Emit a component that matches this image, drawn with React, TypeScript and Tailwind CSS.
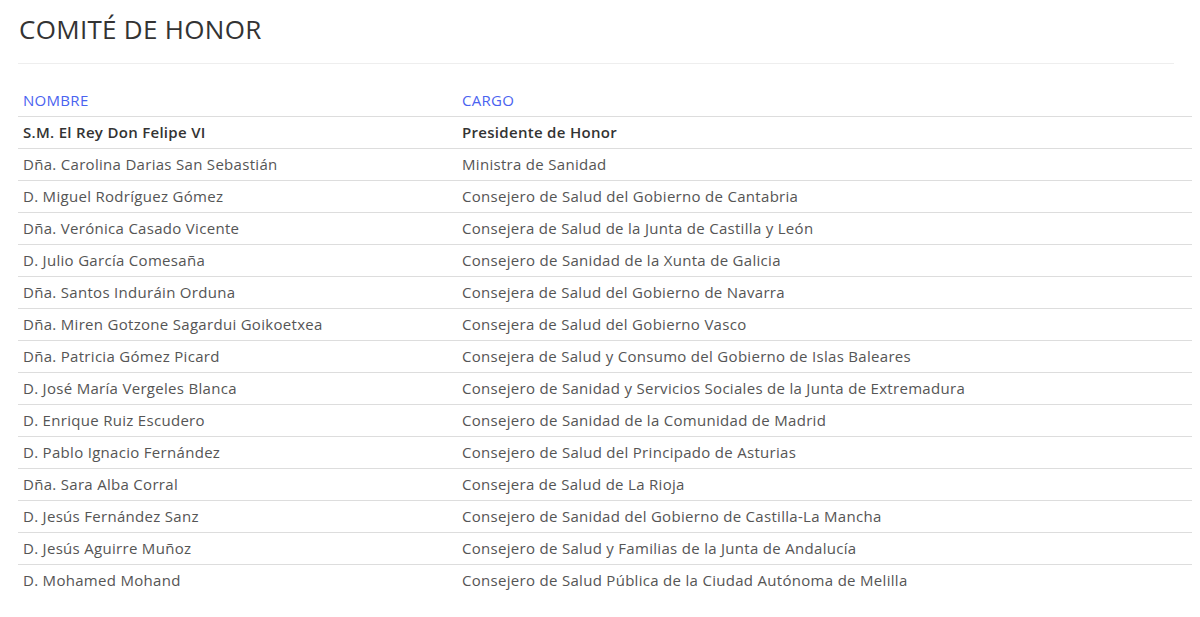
const rows: [string, string][] = [
  ["Dña. Carolina Darias San Sebastián", "Ministra de Sanidad"],
  ["D. Miguel Rodríguez Gómez", "Consejero de Salud del Gobierno de Cantabria"],
  ["Dña. Verónica Casado Vicente", "Consejera de Salud de la Junta de Castilla y León"],
  ["D. Julio García Comesaña", "Consejero de Sanidad de la Xunta de Galicia"],
  ["Dña. Santos Induráin Orduna", "Consejera de Salud del Gobierno de Navarra"],
  ["Dña. Miren Gotzone Sagardui Goikoetxea", "Consejera de Salud del Gobierno Vasco"],
  ["Dña. Patricia Gómez Picard", "Consejera de Salud y Consumo del Gobierno de Islas Baleares"],
  ["D. José María Vergeles Blanca", "Consejero de Sanidad y Servicios Sociales de la Junta de Extremadura"],
  ["D. Enrique Ruiz Escudero", "Consejero de Sanidad de la Comunidad de Madrid"],
  ["D. Pablo Ignacio Fernández", "Consejero de Salud del Principado de Asturias"],
  ["Dña. Sara Alba Corral", "Consejera de Salud de La Rioja"],
  ["D. Jesús Fernández Sanz", "Consejero de Sanidad del Gobierno de Castilla-La Mancha"],
  ["D. Jesús Aguirre Muñoz", "Consejero de Salud y Familias de la Junta de Andalucía"],
  ["D. Mohamed Mohand", "Consejero de Salud Pública de la Ciudad Autónoma de Melilla"],
];

export default function App() {
  return (
    <div className="bg-white min-h-[617px] px-[18px] pt-[12px] text-[15px] tracking-[0.3px] text-[#555]" style={{ fontFamily: '"Open Sans", "Noto Sans", sans-serif' }}>
      <h1 className="text-[26px] text-[#333] font-normal leading-[34px] pl-[1px]">COMITÉ DE HONOR</h1>
      <div className="border-t border-[#eee] mt-[17px] mr-[8px]" />
      <table className="w-[1174px] mt-[20px] border-collapse">
        <thead>
          <tr className="border-b border-[#ddd] text-[#4a63f0]">
            <th className="w-[439px] text-left font-normal px-[5px] h-[32px] align-middle">NOMBRE</th>
            <th className="text-left font-normal px-[5px] align-middle">CARGO</th>
          </tr>
        </thead>
        <tbody>
          <tr className="border-b border-[#ddd] text-[#333] font-semibold">
            <td className="px-[5px] h-[32px]">S.M. El Rey Don Felipe VI</td>
            <td className="px-[5px]">Presidente de Honor</td>
          </tr>
          {rows.map(([n, c], i) => (
            <tr key={n} className={i < rows.length - 1 ? "border-b border-[#ddd]" : ""}>
              <td className="px-[5px] h-[32px]">{n}</td>
              <td className="px-[5px]">{c}</td>
            </tr>
          ))}
        </tbody>
      </table>
    </div>
  );
}
